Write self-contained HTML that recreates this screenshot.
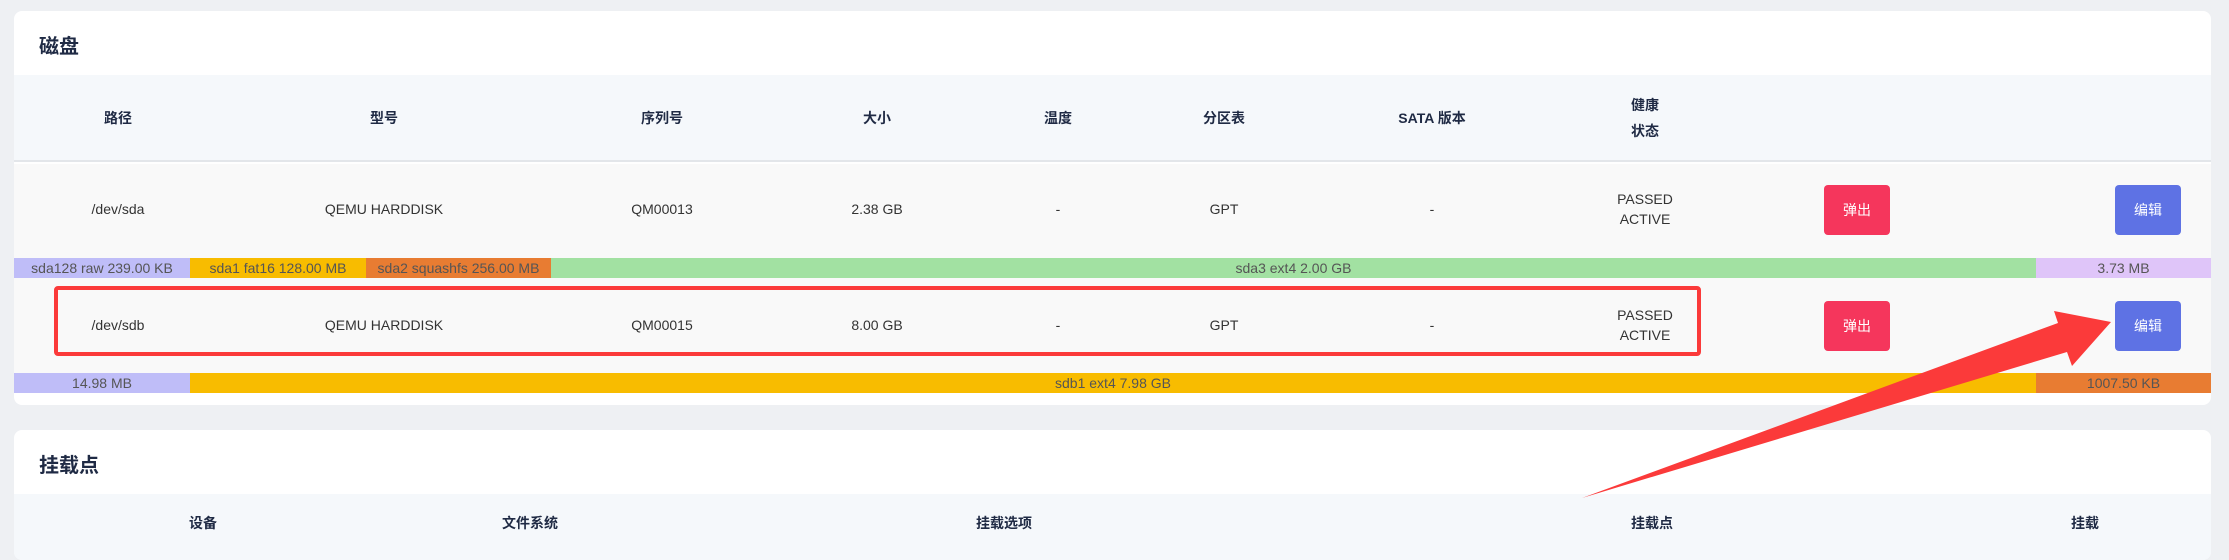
<!DOCTYPE html>
<html><head><meta charset="utf-8"><style>
*{margin:0;padding:0;box-sizing:border-box}
body{width:2229px;height:542px;background:#eef0f3;position:relative;overflow:hidden;font-family:"Liberation Sans","Noto Sans CJK SC",sans-serif;font-size:14px;color:#333}
.card{position:absolute;left:14px;width:2197px;background:#fff;border-radius:8px;overflow:hidden}
.abs{position:absolute}
.c{position:absolute;transform:translate(-50%,-50%);white-space:nowrap;text-align:center}
.h{font-weight:bold;color:#1f2a44}
.btn{position:absolute;width:66px;height:50px;border-radius:4px;color:#fff;display:flex;align-items:center;justify-content:center;font-size:14px}
.seg{position:absolute;height:20px;font-size:14px;color:#555;text-align:center;line-height:20px;white-space:nowrap;overflow:hidden}
</style></head><body>
<div class="card" style="top:11px;height:394px">
  <div class="abs h" style="left:25px;top:19px;font-size:20px">磁盘</div>
  <div class="abs" style="left:0;top:64px;width:100%;height:87px;background:#f5f8fb;border-bottom:2px solid #e3e6ea"></div>
  <div class="abs" style="left:0;top:153px;width:100%;height:94px;background:#f9f9f9"></div>
  <div class="abs" style="left:0;top:267px;width:100%;height:95px;background:#f9f9f9"></div>
</div>
<div class="card" style="top:430px;height:130px">
  <div class="abs h" style="left:25px;top:19px;font-size:20px">挂载点</div>
  <div class="abs" style="left:0;top:64px;width:100%;height:80px;background:#f5f8fb"></div>
</div>
<!-- header -->
<div class="c h" style="left:118px;top:118px">路径</div>
<div class="c h" style="left:384px;top:118px">型号</div>
<div class="c h" style="left:662px;top:118px">序列号</div>
<div class="c h" style="left:877px;top:118px">大小</div>
<div class="c h" style="left:1058px;top:118px">温度</div>
<div class="c h" style="left:1224px;top:118px">分区表</div>
<div class="c h" style="left:1432px;top:118px">SATA 版本</div>
<div class="c h" style="left:1645px;top:118px;line-height:26px">健康<br>状态</div>
<!-- row1 -->
<div class="c" style="left:118px;top:209px">/dev/sda</div>
<div class="c" style="left:384px;top:209px">QEMU HARDDISK</div>
<div class="c" style="left:662px;top:209px">QM00013</div>
<div class="c" style="left:877px;top:209px">2.38 GB</div>
<div class="c" style="left:1058px;top:209px">-</div>
<div class="c" style="left:1224px;top:209px">GPT</div>
<div class="c" style="left:1432px;top:209px">-</div>
<div class="c" style="left:1645px;top:209px;line-height:20px">PASSED<br>ACTIVE</div>
<div class="btn" style="left:1824px;top:185px;background:#f5365c">弹出</div>
<div class="btn" style="left:2115px;top:185px;background:#5e72e4">编辑</div>
<div class="seg" style="left:14px;top:258px;width:176px;background:#bfbdf8">sda128 raw 239.00 KB</div>
<div class="seg" style="left:190px;top:258px;width:176px;background:#f8bc00">sda1 fat16 128.00 MB</div>
<div class="seg" style="left:366px;top:258px;width:185px;background:#e87c32">sda2 squashfs 256.00 MB</div>
<div class="seg" style="left:551px;top:258px;width:1485px;background:#a2e1a2">sda3 ext4 2.00 GB</div>
<div class="seg" style="left:2036px;top:258px;width:175px;background:#dfc5f9">3.73 MB</div>
<!-- row2 -->
<div class="c" style="left:118px;top:325px">/dev/sdb</div>
<div class="c" style="left:384px;top:325px">QEMU HARDDISK</div>
<div class="c" style="left:662px;top:325px">QM00015</div>
<div class="c" style="left:877px;top:325px">8.00 GB</div>
<div class="c" style="left:1058px;top:325px">-</div>
<div class="c" style="left:1224px;top:325px">GPT</div>
<div class="c" style="left:1432px;top:325px">-</div>
<div class="c" style="left:1645px;top:325px;line-height:20px">PASSED<br>ACTIVE</div>
<div class="btn" style="left:1824px;top:301px;background:#f5365c">弹出</div>
<div class="btn" style="left:2115px;top:301px;background:#5e72e4">编辑</div>
<div class="seg" style="left:14px;top:373px;width:176px;background:#bfbdf8">14.98 MB</div>
<div class="seg" style="left:190px;top:373px;width:1846px;background:#f8bc00">sdb1 ext4 7.98 GB</div>
<div class="seg" style="left:2036px;top:373px;width:175px;background:#e87c32">1007.50 KB</div>
<!-- red box -->
<div class="abs" style="left:54px;top:286px;width:1647px;height:70px;border:4px solid #fb3a3a;border-radius:4px"></div>
<!-- card2 header -->
<div class="c h" style="left:203px;top:523px">设备</div>
<div class="c h" style="left:530px;top:523px">文件系统</div>
<div class="c h" style="left:1004px;top:523px">挂载选项</div>
<div class="c h" style="left:1652px;top:523px">挂载点</div>
<div class="c h" style="left:2085px;top:523px">挂载</div>
<svg class="abs" style="left:0;top:0" width="2229" height="542"><polygon points="1582,498 2058,323 2054,311 2111,322 2072,366 2067,352" fill="#fb3a3a"/></svg>
</body></html>
